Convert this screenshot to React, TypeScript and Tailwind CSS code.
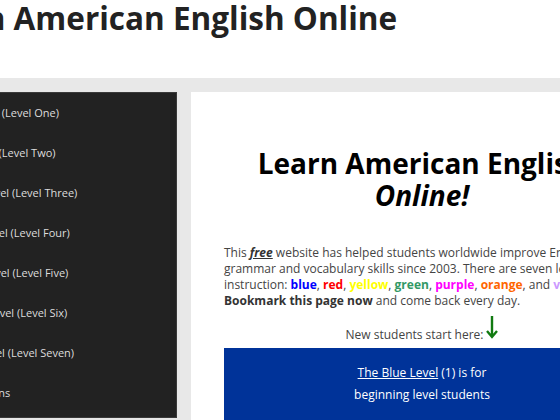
import { type ReactNode } from 'react';

const levels = [
  'The Blue Level (Level One)',
  'The Red Level (Level Two)',
  'The Yellow Level (Level Three)',
  'The Green Level (Level Four)',
  'The Purple Level (Level Five)',
  'The Orange Level (Level Six)',
  'The Violet Level (Level Seven)',
  'Reading Lessons',
];

function Word({ color, children }: { color: string; children: ReactNode }) {
  return <b className={color}>{children}</b>;
}

function DownArrow() {
  return (
    <svg width="12" height="24" viewBox="0 0 12 24" className="mb-[9px] ml-[3px] shrink-0">
      <path d="M6 1 V22 M1 16 L6 22 L11 16" fill="none" stroke="#117a11" strokeWidth="2.4" />
    </svg>
  );
}

export default function App() {
  return (
    <div className="w-[560px] h-[420px] overflow-hidden bg-white font-['Open_Sans',sans-serif]">
      <div className="ml-[-90px] w-[743px]">
        <header className="h-[78px] pl-[5px]">
          <h1 className="text-[31.5px] font-bold leading-[36px] text-[#222]">
            Learn American English Online
          </h1>
        </header>

        <div className="bg-[#e8e8e8] h-[342px] pt-[14px] pl-[14px] flex gap-[14px]">
          <nav className="w-[253px] h-[326px] bg-[#222] border border-[#3a3a3a]">
            <ul>
              {levels.map((l) => (
                <li key={l} className="h-[40px] flex items-center text-[11px] text-[#ddd]">
                  <a href="#">{l}</a>
                </li>
              ))}
            </ul>
          </nav>

          <main className="flex-1 bg-white px-[33px] pt-[55px]">
            <h2 className="text-center text-[28px] font-bold leading-[32px] text-black">
              Learn American English
              <br />
              <i>Online!</i>
            </h2>

            <p className="mt-[34px] text-[12px] leading-[16px] text-[#444] whitespace-nowrap">
              This <b className="underline italic text-[#333]">free</b> website has helped students
              worldwide improve English
              <br />
              grammar and vocabulary skills since 2003. There are seven levels of
              <br />
              instruction: <Word color="text-[#0000ff]">blue</Word>,{' '}
              <Word color="text-[#ff0000]">red</Word>, <Word color="text-[#ffff00]">yellow</Word>,{' '}
              <Word color="text-[#339966]">green</Word>, <Word color="text-[#ff00ff]">purple</Word>,{' '}
              <Word color="text-[#ff6600]">orange</Word>, and{' '}
              <Word color="text-[#cc99ff]">violet</Word>.
              <br />
              <b className="text-[#333]">Bookmark this page now</b> and come back every day.
            </p>

            <div className="mt-[6px] h-[33px] flex justify-center items-end text-[12px] text-[#444]">
              <span className="leading-[16px] pb-[5px]">New students start here:</span>
              <DownArrow />
            </div>

            <div className="bg-[#003399] text-white text-center text-[12px] leading-[22px] pt-[14px] pb-[14px]">
              <a href="#" className="underline">
                The Blue Level
              </a>{' '}
              (1) is for
              <br />
              beginning level students
            </div>
          </main>
        </div>
      </div>
    </div>
  );
}
